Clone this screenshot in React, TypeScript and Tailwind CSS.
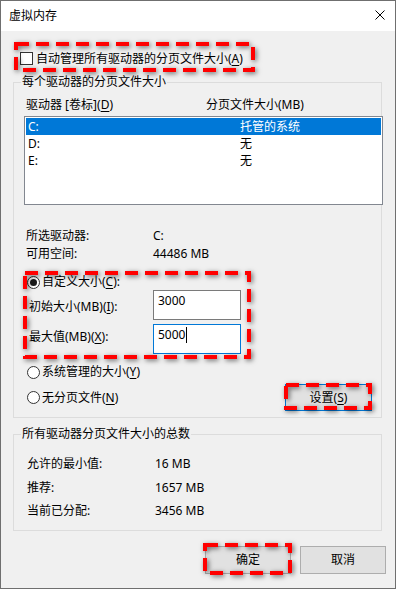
import React from "react";

const U = ({ children }: { children: React.ReactNode }) => (
  <span className="underline underline-offset-[2px]">{children}</span>
);

const Radio = ({ checked }: { checked?: boolean }) => (
  <span className="w-[13px] h-[13px] rounded-full border border-[#333333] bg-white flex items-center justify-center shrink-0">
    {checked && <span className="w-[7px] h-[7px] rounded-full bg-[#1a1a1a]" />}
  </span>
);

export default function App() {
  return (
    <div className="relative w-[396px] h-[589px] border border-[#6f6f6f] bg-[#f0f0f0] text-[12px] leading-[14px] text-black font-['Noto_Sans','Noto_Sans_CJK_SC',sans-serif] flex flex-col overflow-hidden">
      {/* title bar */}
      <div className="h-[30px] shrink-0 bg-white flex items-center pl-[8px] pr-[10px] pb-[1px]">
        <span className="flex-1">虚拟内存</span>
        <svg width="10" height="10" viewBox="0 0 10 10" className="mt-[-1px]">
          <path d="M0.5 0.5 L9.5 9.5 M9.5 0.5 L0.5 9.5" stroke="#000" strokeWidth="1" fill="none" />
        </svg>
      </div>

      {/* auto manage checkbox */}
      <div className="mt-[21px] ml-[19px] h-[13px] flex items-center gap-[3px]">
        <span className="w-[13px] h-[13px] border border-[#333333] bg-white shrink-0" />
        <span>
          自动管理所有驱动器的分页文件大小(<U>A</U>)
        </span>
      </div>

      {/* group 1 */}
      <div className="mt-[17px] ml-[12px] w-[369px] border border-[#dcdcdc] pb-[6px]">
        <span className="block w-fit -mt-[8px] ml-[7px] px-[1px] bg-[#f0f0f0]">每个驱动器的分页文件大小</span>
        <div className="mt-[9px] ml-[12px] flex">
          <span className="w-[180px]">
            驱动器 [卷标](<U>D</U>)
          </span>
          <span>分页文件大小(MB)</span>
        </div>
        <div className="mt-[4px] ml-[10px] w-[359px] h-[89px] border border-[#828790] bg-white p-[1px]">
          <div className="h-[17px] flex items-center bg-[#0078d7] text-white">
            <span className="w-[214px] pl-[2px]">C:</span>
            <span>托管的系统</span>
          </div>
          <div className="h-[17px] flex items-center">
            <span className="w-[214px] pl-[2px]">D:</span>
            <span>无</span>
          </div>
          <div className="h-[17px] flex items-center">
            <span className="w-[214px] pl-[2px]">E:</span>
            <span>无</span>
          </div>
        </div>

        <div className="mt-[24px] ml-[12px] flex">
          <span className="w-[127px]">所选驱动器:</span>
          <span>C:</span>
        </div>
        <div className="mt-[4px] ml-[12px] flex">
          <span className="w-[127px]">可用空间:</span>
          <span>44486 MB</span>
        </div>

        <div className="mt-[14px] ml-[13px] h-[14px] flex items-center gap-[2px]">
          <Radio checked />
          <span>
            自定义大小(<U>C</U>):
          </span>
        </div>
        <div className="mt-[1px] ml-[15px] flex">
          <span className="w-[124px] pt-[10px]">
            初始大小(MB)(<U>I</U>):
          </span>
          <div className="w-[88px] h-[30px] border border-[#7a7a7a] bg-white pl-[4px] pt-[3px]">3000</div>
        </div>
        <div className="mt-[4px] ml-[15px] flex">
          <span className="w-[124px] pt-[6px]">
            最大值(MB)(<U>X</U>):
          </span>
          <div className="w-[88px] h-[30px] border border-[#0078d7] bg-white pl-[4px] pt-[3px] flex items-start">
            <span>5000</span>
            <span className="inline-block w-px h-[16px] bg-black ml-[1px] mt-[-1px]" />
          </div>
        </div>

        <div className="mt-[11px] ml-[13px] h-[14px] flex items-center gap-[2px]">
          <Radio />
          <span>
            系统管理的大小(<U>Y</U>)
          </span>
        </div>
        <div className="mt-[5px] h-[27px] flex items-center">
          <div className="ml-[13px] flex items-center gap-[2px]">
            <Radio />
            <span>
              无分页文件(<U>N</U>)
            </span>
          </div>
          <button className="ml-auto mr-[9px] w-[87px] h-[27px] border border-[#0078d7] bg-[#e1e1e1] flex items-center justify-center">
            <span>
              设置(<U>S</U>)
            </span>
          </button>
        </div>
      </div>

      {/* group 2 */}
      <div className="mt-[16px] ml-[12px] w-[369px] border border-[#dcdcdc] pb-[12px]">
        <span className="block w-fit -mt-[8px] ml-[7px] px-[1px] bg-[#f0f0f0]">所有驱动器分页文件大小的总数</span>
        <div className="mt-[16px] ml-[13px] flex">
          <span className="w-[128px]">允许的最小值:</span>
          <span>16 MB</span>
        </div>
        <div className="mt-[10px] ml-[13px] flex">
          <span className="w-[128px]">推荐:</span>
          <span>1657 MB</span>
        </div>
        <div className="mt-[9px] ml-[13px] flex">
          <span className="w-[128px]">当前已分配:</span>
          <span>3456 MB</span>
        </div>
      </div>

      {/* buttons */}
      <div className="mt-[15px] flex justify-end gap-[9px] pr-[9px]">
        <button className="w-[86px] h-[28px] border border-[#adadad] bg-[#e1e1e1] flex items-center justify-center">确定</button>
        <button className="w-[86px] h-[28px] border border-[#adadad] bg-[#e1e1e1] flex items-center justify-center">取消</button>
      </div>

      {/* red annotation overlays */}
      <svg
        className="absolute -left-px -top-px pointer-events-none"
        width="396"
        height="589"
        viewBox="0 0 396 589"
      >
        <defs>
          <filter id="sh" x="-20%" y="-30%" width="140%" height="160%">
            <feDropShadow dx="1.5" dy="1.5" stdDeviation="2.4" floodColor="#000" floodOpacity="0.6" />
          </filter>
        </defs>
        <g fill="none" stroke="#ff0000" strokeWidth="4" strokeDasharray="13 7" filter="url(#sh)">
          <rect x="16" y="44" width="237" height="26" />
          <rect x="25" y="273" width="224" height="84" />
          <rect x="286" y="385" width="84" height="23" />
          <rect x="205" y="545" width="85" height="28" />
        </g>
      </svg>
    </div>
  );
}
